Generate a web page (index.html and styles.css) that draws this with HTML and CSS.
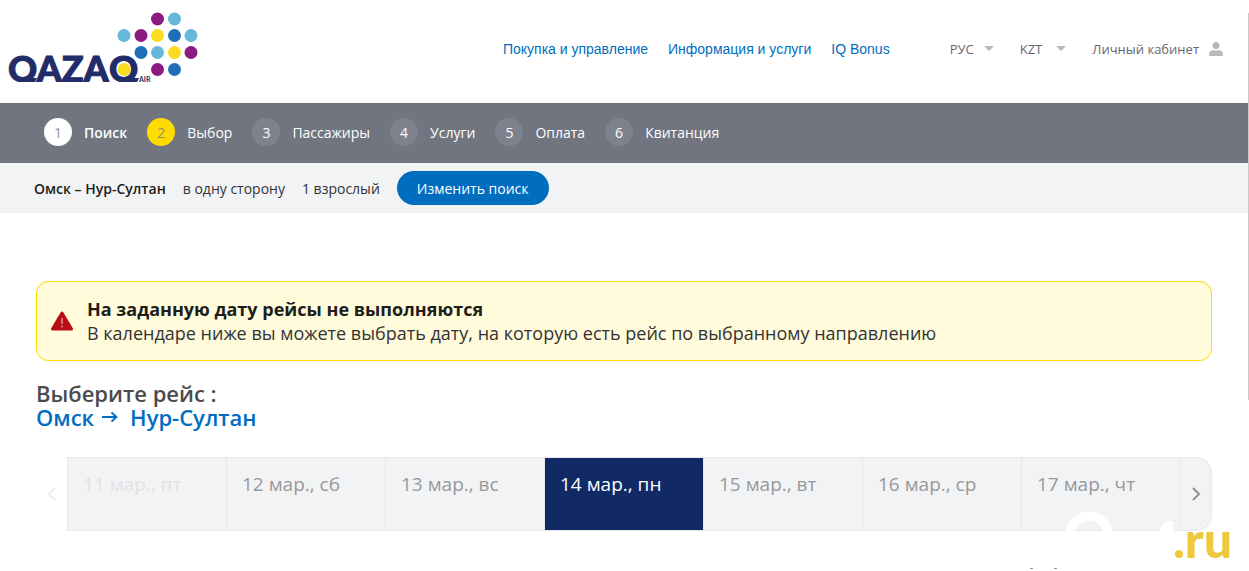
FILE: index.html
```html
<!DOCTYPE html>
<html lang="ru">
<head>
<meta charset="utf-8">
<title>QAZAQ AIR – Выбор рейса</title>
<link rel="stylesheet" href="styles.css">
</head>
<body>
<header class="header">
  <a class="logo" href="#" aria-label="QAZAQ AIR">
    <svg width="200" height="88" viewBox="0 0 200 88">
      <clipPath id="logo-base"><rect width="200" height="82"/></clipPath>
      <g clip-path="url(#logo-base)">
        <text class="logo-name" x="8" y="82">QAZA<tspan x="109">Q</tspan></text>
        <path d="M24 78h13l-2 4H22zM125 78h14l-2 4h-14z" fill="#212c68"/>
      </g>
      <circle cx="124" cy="69.500" r="6.500" fill="#fadc21"/>
      <text class="logo-air" x="139" y="82">AIR</text>
      <g fill="#8c1a80"><circle cx="157.500" cy="19" r="6.500"/><circle cx="141" cy="35.500" r="6.500"/><circle cx="191" cy="52.500" r="6.500"/><circle cx="157.500" cy="69.500" r="6.500"/></g>
      <g fill="#66b8da"><circle cx="174.500" cy="19" r="6.500"/><circle cx="124" cy="35.500" r="6.500"/><circle cx="191" cy="35.500" r="6.500"/><circle cx="157.500" cy="52.500" r="6.500"/></g>
      <g fill="#fadc21"><circle cx="157.500" cy="35.500" r="6.500"/><circle cx="174.500" cy="52.500" r="6.500"/></g>
      <g fill="#1f6fb8"><circle cx="174.500" cy="35.500" r="6.500"/><circle cx="141" cy="52.500" r="6.500"/><circle cx="174.500" cy="69.500" r="6.500"/></g>
    </svg>
  </a>
  <nav class="nav">
    <a href="#">Покупка и управление</a>
    <a href="#">Информация и услуги</a>
    <a href="#">IQ Bonus</a>
  </nav>
  <div class="tools">
    <button class="tool" type="button">РУС <span class="caret"></span></button>
    <button class="tool" type="button">KZT <span class="caret caret-wide"></span></button>
    <a class="tool account" href="#">Личный кабинет
      <svg width="14" height="14" viewBox="0 0 14 14" fill="#b9babc"><circle cx="7" cy="3.500" r="3.500"/><path d="M0 14v-2c0-2.500 2-3.800 4-3.800h6c2 0 4 1.300 4 3.800v2z"/></svg>
    </a>
  </div>
</header>
<ol class="steps">
  <li class="step done"><span class="num">1</span>Поиск</li>
  <li class="step current"><span class="num">2</span>Выбор</li>
  <li class="step"><span class="num">3</span>Пассажиры</li>
  <li class="step"><span class="num">4</span>Услуги</li>
  <li class="step"><span class="num">5</span>Оплата</li>
  <li class="step"><span class="num">6</span>Квитанция</li>
</ol>
<section class="summary">
  <span class="route">Омск – Нур-Султан</span>
  <span>в одну сторону</span>
  <span>1 взрослый</span>
  <button class="change" type="button">Изменить поиск</button>
</section>
<main class="main">
  <div class="alert" role="alert">
    <svg width="22" height="20" viewBox="0 0 22 20"><path d="M11 2L20.500 18H1.500z" fill="#b90d14" stroke="#b90d14" stroke-width="3" stroke-linejoin="round"/><path d="M11 7v6M11 14.500v2" stroke="#e3988d" stroke-width="1.500"/></svg>
    <div>
      <p class="alert-title">На заданную дату рейсы не выполняются</p>
      <p class="alert-text">В календаре ниже вы можете выбрать дату, на которую есть рейс по выбранному направлению</p>
    </div>
  </div>
  <h1 class="title">Выберите рейс :
    <span class="direction">Омск
      <svg width="16" height="14" viewBox="0 0 16 14" fill="none" stroke="#006dbf" stroke-width="1.800"><path d="M0 7h14M9.500 2.500L14.500 7l-5 4.500"/></svg>
      <span>Нур-Султан</span></span>
  </h1>
  <div class="calendar">
    <button class="arrow prev" type="button" aria-label="Назад" disabled><svg width="9" height="16" viewBox="0 0 9 16"><path d="M8 2L2 8l6 6"/></svg></button>
    <button class="day faded" type="button" disabled>11 мар., пт</button>
    <button class="day" type="button">12 мар., сб</button>
    <button class="day" type="button">13 мар., вс</button>
    <button class="day selected" type="button">14 мар., пн</button>
    <button class="day" type="button">15 мар., вт</button>
    <button class="day" type="button">16 мар., ср</button>
    <button class="day" type="button">17 мар., чт</button>
    <button class="arrow next" type="button" aria-label="Вперёд"><svg width="9" height="16" viewBox="0 0 9 16"><path d="M1 2l6 6-6 6"/></svg></button>
  </div>
</main>
<div class="watermark">
  <svg width="160" height="62" viewBox="0 0 160 62"><circle cx="64" cy="28" r="19" fill="none" stroke="#fff" stroke-width="9"/><path d="M132 27l7-11c1-2 2-2 4-2h5v13z" fill="#fff"/><path d="M5 61.500h3M29 61.500h3" stroke="#999"/></svg>
  <span class="watermark-text">.ru</span>
</div>
<div class="scrollbar"></div>
</body>
</html>
```

FILE: styles.css
```css
* { box-sizing: border-box; }
body {
  margin: 0;
  min-height: 100vh;
  position: relative;
  overflow: hidden;
  background: #fff;
  color: #1d1d1b;
  font-family: "Open Sans", "Noto Sans", sans-serif;
  font-size: 14px;
}
button { font: inherit; color: inherit; border: 0; margin: 0; padding: 0; background: none; }
a { color: inherit; text-decoration: none; }
p { margin: 0; }
svg { display: block; flex: none; }

.header { display: flex; align-items: center; height: 103px; padding-right: 26px; }
.logo { align-self: flex-start; margin-right: auto; }
.logo-name { font: 900 36px Lato, sans-serif; fill: #212c68; stroke: #212c68; stroke-width: 1px; }
.logo-air { font: 700 7px Lato, sans-serif; fill: #212c68; }
.nav { display: flex; gap: 20px; margin: 0 60px 6px 0; color: #006dbf; font: 14px "Liberation Sans", sans-serif; }
.tools { display: flex; margin-bottom: 6px; color: #66676b; font-size: 13px; }
.tool { display: flex; align-items: center; gap: 10px; margin-right: 26px; }
.account { margin-right: 0; }
.caret { border: 5px solid transparent; border-top-color: #b9babc; border-bottom: 0; }
.caret-wide { margin-left: 4px; }

.steps {
  display: flex; align-items: center; gap: 20px;
  height: 60px; margin: 0; padding: 0 44px 2px;
  list-style: none; background: #70757f; color: #fff;
}
.step { display: flex; align-items: center; gap: 12px; }
.num {
  display: grid; place-items: center; width: 28px; height: 28px;
  border-radius: 50%; background: #7d828c;
}
.done { font-weight: 600; }
.done .num { background: #fff; color: #8d939c; font-weight: 400; }
.current .num { background: #fedc00; color: #8d8f70; }

.summary { display: flex; align-items: center; gap: 17px; height: 50px; padding: 0 34px; background: #f2f3f5; color: #333; }
.route { color: #1d1d1b; font-weight: 600; }
.change { height: 34px; padding: 0 20px; border-radius: 17px; background: #006dbf; color: #fff; }

.main { padding: 68px 37px 0 36px; }
.alert {
  display: flex; align-items: center; gap: 14px; height: 80px; padding: 0 14px;
  border: 1px solid #fedc00; border-radius: 12px; background: #fffbdb;
  font-size: 18px; line-height: 24px;
}
.alert-title { font-weight: 700; }
.alert-text { color: #333; }
.title { margin: 20px 0 28px; color: #4b4b4d; font-size: 22px; line-height: 24px; font-weight: 600; }
.direction { display: flex; align-items: center; gap: 8px; color: #006dbf; }
.direction span { margin-left: 4px; }

.calendar { display: flex; height: 74px; }
.day {
  flex: 1; display: flex; padding: 13px 15px; border: solid #e6e8ea; border-width: 1px 0 1px 1px;
  background: #f2f3f5; color: #97989a; font-size: 19px; white-space: nowrap;
}
.faded { color: #e1e2e4; }
.selected { background: #112a66; color: #fff; }
.arrow { display: grid; place-items: center; width: 32px; }
.arrow path { fill: none; stroke: #8f9092; stroke-width: 2; }
.prev { width: 31px; }
.prev path { stroke: #eceded; }
.next { border: 1px solid #e6e8ea; border-radius: 0 16px 16px 0; background: #f2f3f5; }

.watermark { position: absolute; right: 17px; bottom: 0; display: flex; }
.watermark-text { margin-left: -12px; color: #efc93d; font: 900 50px/64px Lato, sans-serif; }
.scrollbar { position: absolute; top: 13px; right: 0; width: 1px; height: 387px; background: #c9c9c9; }
```
